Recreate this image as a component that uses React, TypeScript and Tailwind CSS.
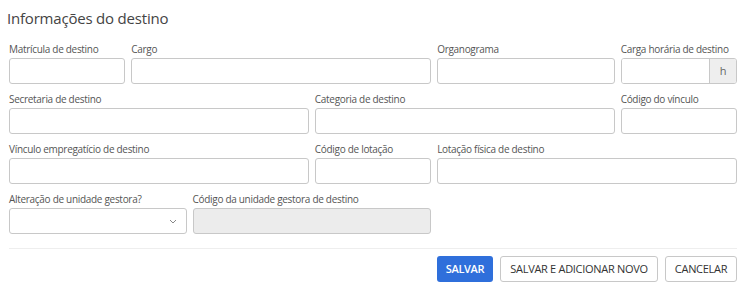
import React from "react";

const font = { fontFamily: '"Open Sans", "Noto Sans", sans-serif' };

function Field({ label, span, children }: { label: string; span: string; children?: React.ReactNode }) {
  return (
    <div className={`${span} flex flex-col`}>
      <label className="text-[10px] leading-[14px] tracking-[-0.3px] text-[#555] mb-[2px] whitespace-nowrap">{label}</label>
      {children ?? <input className="h-[26px] w-full rounded-[3px] border border-[#c8c8c8] bg-white px-2 text-[11px] outline-none" />}
    </div>
  );
}

export default function App() {
  return (
    <div className="w-[746px] h-[286px] bg-white px-[9px] overflow-hidden" style={font}>
      <h2 className="pt-[8px] text-[15px] leading-[20px] tracking-[-0.2px] text-[#444] font-normal -ml-[2px]">Informações do destino</h2>
      <div className="mt-[14px] grid grid-cols-12 gap-x-[6px] gap-y-[8px]">
        <Field label="Matrícula de destino" span="col-span-2" />
        <Field label="Cargo" span="col-span-5" />
        <Field label="Organograma" span="col-span-3" />
        <Field label="Carga horária de destino" span="col-span-2">
          <div className="flex h-[26px] w-full rounded-[3px] border border-[#c8c8c8] overflow-hidden">
            <input className="min-w-0 flex-1 bg-white px-2 text-[11px] outline-none" />
            <span className="flex w-[27px] items-center justify-center border-l border-[#c8c8c8] bg-[#eeeeee] text-[11px] text-[#666]">h</span>
          </div>
        </Field>

        <Field label="Secretaria de destino" span="col-span-5" />
        <Field label="Categoria de destino" span="col-span-5" />
        <Field label="Código do vínculo" span="col-span-2" />

        <Field label="Vínculo empregatício de destino" span="col-span-5" />
        <Field label="Código de lotação" span="col-span-2" />
        <Field label="Lotação física de destino" span="col-span-5" />

        <Field label="Alteração de unidade gestora?" span="col-span-3">
          <div className="flex h-[26px] w-full items-center justify-end rounded-[3px] border border-[#c8c8c8] bg-white pr-[9px]">
            <svg width="8" height="5" viewBox="0 0 8 5" fill="none">
              <path d="M1 1l3 3 3-3" stroke="#888" strokeWidth="1" />
            </svg>
          </div>
        </Field>
        <Field label="Código da unidade gestora de destino" span="col-span-4">
          <div className="h-[26px] w-full rounded-[3px] border border-[#c8c8c8] bg-[#ececec]" />
        </Field>
      </div>
      <div className="mt-[14px] border-t border-[#eeeeee]" />
      <div className="mt-[7px] flex justify-end gap-[7px]">
        <button className="h-[26px] w-[56px] rounded-[3px] bg-[#2f6fdb] text-[11px] tracking-[-0.3px] text-white font-semibold">SALVAR</button>
        <button className="h-[26px] w-[158px] rounded-[3px] border border-[#c8c8c8] bg-white text-[11px] tracking-[-0.3px] text-[#333]">SALVAR E ADICIONAR NOVO</button>
        <button className="h-[26px] w-[72px] rounded-[3px] border border-[#c8c8c8] bg-white text-[11px] tracking-[-0.3px] text-[#333]">CANCELAR</button>
      </div>
    </div>
  );
}
